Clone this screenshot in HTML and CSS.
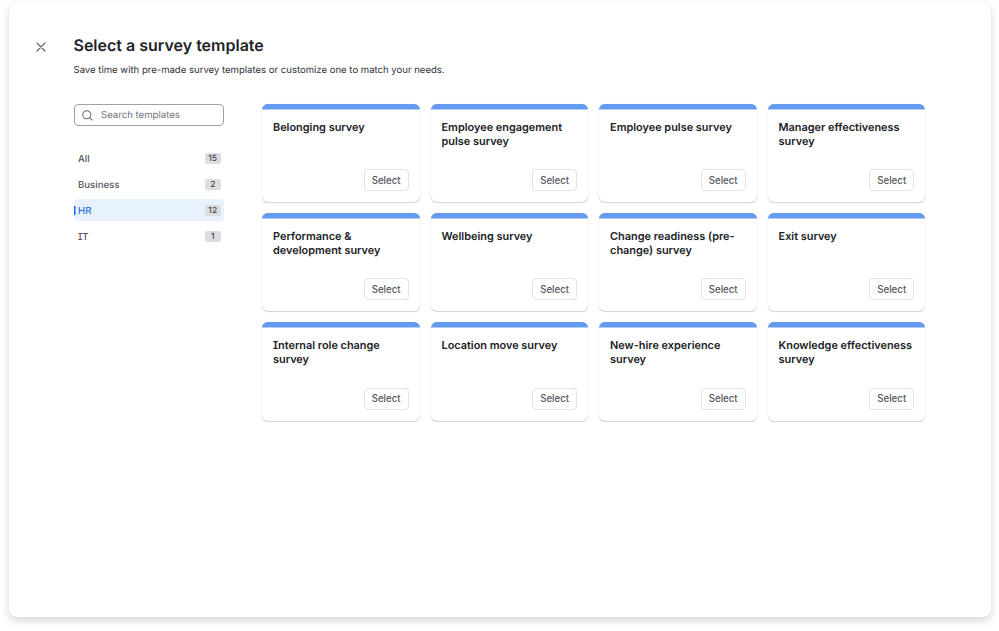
FILE: index.html
```
<!DOCTYPE html>
<html lang="en">
	<head>
		<meta charset="UTF-8" />
		<meta name="viewport" content="width=device-width, initial-scale=1.0" />
		<title>Select a survey template</title>
		<link rel="stylesheet" href="styles.css">
	</head>
	<body>
		<div class="modal">
			<button type="button" class="close" aria-label="Close">
				<svg width="10" height="10" viewBox="0 0 10 10"><path d="M1 1 9 9M9 1 1 9" /></svg>
			</button>
			<div class="modal-content">
				<h1>Select a survey template</h1>
				<p class="subtitle">Save time with pre-made survey templates or customize one to match your needs.</p>

				<div class="columns">
					<!-- Sidebar: Begin -->
					<div class="sidebar">
						<label class="search">
							<svg width="11" height="11" viewBox="0 0 12 12"><circle cx="5.2" cy="5.2" r="4.4" /><path d="M8.4 8.4 11 11" /></svg>
							<input type="text" placeholder="Search templates" />
						</label>
						<nav>
							<a class="category"><span class="name">All</span><span class="count">15</span></a>
							<a class="category"><span class="name">Business</span><span class="count">2</span></a>
							<a class="category active"><span class="name">HR</span><span class="count">12</span></a>
							<a class="category"><span class="name">IT</span><span class="count">1</span></a>
						</nav>
					</div>
					<!-- Sidebar: End -->

					<!-- Templates: Begin -->
					<div class="templates">
						<div class="card"><h2>Belonging survey</h2><button type="button">Select</button></div>
						<div class="card"><h2>Employee engagement pulse survey</h2><button type="button">Select</button></div>
						<div class="card"><h2>Employee pulse survey</h2><button type="button">Select</button></div>
						<div class="card"><h2>Manager effectiveness survey</h2><button type="button">Select</button></div>
						<div class="card"><h2>Performance &amp; development survey</h2><button type="button">Select</button></div>
						<div class="card"><h2>Wellbeing survey</h2><button type="button">Select</button></div>
						<div class="card"><h2>Change readiness (pre-change) survey</h2><button type="button">Select</button></div>
						<div class="card"><h2>Exit survey</h2><button type="button">Select</button></div>
						<div class="card"><h2>Internal role change survey</h2><button type="button">Select</button></div>
						<div class="card"><h2>Location move survey</h2><button type="button">Select</button></div>
						<div class="card"><h2>New-hire experience survey</h2><button type="button">Select</button></div>
						<div class="card"><h2>Knowledge effectiveness survey</h2><button type="button">Select</button></div>
					</div>
					<!-- Templates: End -->
				</div>
			</div>
		</div>
	</body>
</html>
```
FILE: styles.css
```
* {
	box-sizing: border-box;
}

body {
	margin: 0;
	padding: 3px 8px 0 8.5px;
	height: 631px;
	overflow: hidden;
	background-color: #fff;
	color: #202226;
	font-family: Inter, "Liberation Sans", sans-serif;
	font-feature-settings: "cv08"; /* capital I with serifs */
	text-rendering: geometricPrecision;
}

h1,
h2,
p {
	margin: 0;
}

button {
	font-family: inherit;
	cursor: pointer;
}

.modal {
	display: flex;
	height: 614px;
	padding: 32.5px 65.8px 0 27px;
	border-radius: 8px;
	background-color: #fff;
	box-shadow: 0 0 1px rgba(0, 0, 0, 0.12), 0 4px 8px rgba(0, 0, 0, 0.15);
}

.close {
	display: flex;
	width: 10px;
	height: 10px;
	margin: 6px 28px 0 0;
	padding: 0;
	border: 0;
	background: none;
}

svg {
	display: block;
	flex: none;
	fill: none;
	stroke: #62636a;
	stroke-width: 1.1;
	stroke-linecap: round;
}

.modal-content {
	flex: 1;
}

h1 {
	font-size: 16px;
	line-height: 19px;
	font-weight: 600;
}

.subtitle {
	margin-top: 9px;
	font-size: 9.56px;
	line-height: 14px;
	color: #303237;
}

.columns {
	display: flex;
	gap: 38px;
	margin-top: 26.5px;
}

.sidebar {
	width: 150.5px;
}

.search {
	display: flex;
	align-items: center;
	gap: 8px;
	height: 22px;
	padding: 0 7.5px;
	border: 1px solid #a0a1a9;
	border-radius: 4px;
}

.search input {
	flex: 1;
	min-width: 0;
	padding: 0;
	border: 0;
	outline: 0;
	font: 9.6px Inter, "Liberation Sans", sans-serif;
	text-rendering: geometricPrecision;
}

.search input::placeholder {
	color: #74757d;
}

nav {
	display: flex;
	flex-direction: column;
	gap: 4px;
	margin-top: 21.4px;
}

.category {
	display: flex;
	align-items: center;
	justify-content: space-between;
	height: 22px;
	padding: 0 3px 0 4.5px;
	border-radius: 4px;
	font-size: 9.6px;
	line-height: 14px;
	font-weight: 500;
	color: #55565c;
}

.category.active {
	background: linear-gradient(#1a68dc, #1a68dc) 0 center / 1.5px 9px no-repeat #e8f1fe;
	color: #2470dc;
}

.name {
	padding-top: 3px;
}

.count {
	width: 16.5px;
	height: 11px;
	border-radius: 2px;
	background-color: #dcdde1;
	color: #44464c;
	font-size: 8.5px;
	line-height: 12px;
	text-align: center;
}

.templates {
	flex: 1;
	display: grid;
	grid-template-columns: repeat(4, 1fr);
	grid-auto-rows: 98.3px;
	gap: 10.9px;
}

.card {
	display: flex;
	flex-direction: column;
	justify-content: space-between;
	padding: 17px 11px 11px;
	border-radius: 6px;
	background: linear-gradient(#659bef, #659bef) 0 0 / 100% 5.5px no-repeat #fff;
	box-shadow: 0 0 1px rgba(0, 0, 0, 0.25), 0 1px 1px rgba(0, 0, 0, 0.15);
}

.card h2 {
	font-size: 10.9px;
	line-height: 13.8px;
	font-weight: 600;
}

.card button {
	align-self: flex-end;
	width: 45px;
	height: 22px;
	padding: 0;
	border: 1px solid #e2e3e6;
	border-radius: 4px;
	background-color: #fff;
	color: #55565c;
	font-size: 9.7px;
	font-weight: 500;
}
```
